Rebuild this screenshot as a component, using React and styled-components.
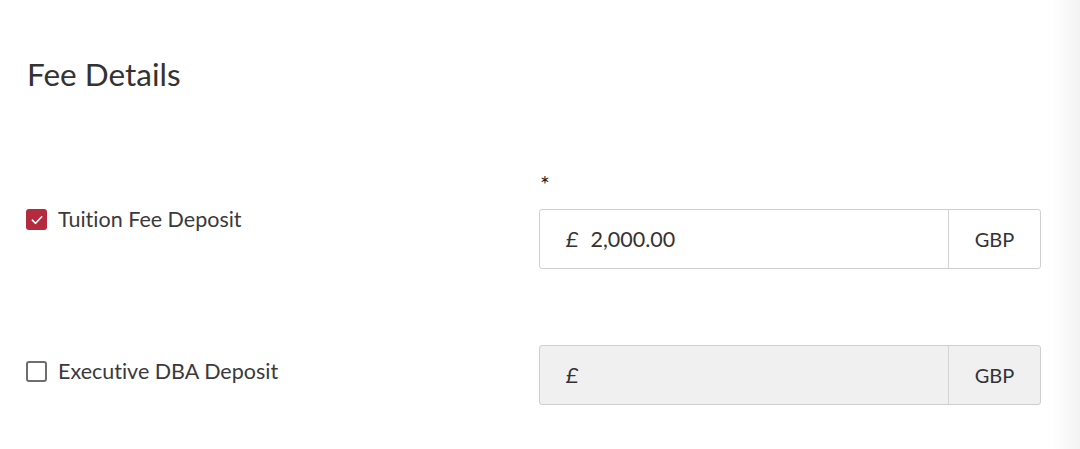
import React from 'react'
import styled, {createGlobalStyle} from 'styled-components'

const GlobalStyle = createGlobalStyle`
    html, body {
        margin: 0;
        padding: 0;
    }
    body {
        font-family: Lato, "Open Sans", sans-serif;
        font-variant-ligatures: none;
        color: #333;
        background: linear-gradient(to right, #fff 0, #fff 1052px, #f3f3f3 1080px);
        min-height: 449px;
    }
`

const Page = styled.div`
    padding: 57px 0 0 26px;
    min-height: 392px;
`

const Heading = styled.h2`
    margin: 0 0 79px 1px;
    font-size: 31.5px;
    line-height: 35px;
    font-weight: 400;
    color: #333;
`

const Row = styled.div`
    display: grid;
    grid-template-columns: 513px 502px;
    margin-top: ${p => p.$gap || 0}px;
`

const LabelCell = styled.div`
    padding-top: ${p => p.$offset || 0}px;
`

const CheckLabel = styled.label`
    display: flex;
    align-items: center;
    gap: 11px;
    font-size: 21.5px;
    line-height: 21px;
    color: #3a3a3a;
    cursor: pointer;
`

const Box = styled.span`
    display: inline-flex;
    align-items: center;
    justify-content: center;
    box-sizing: border-box;
    width: 21px;
    height: 21px;
    border-radius: 3px;
    background: ${p => p.$checked ? '#b42b3d' : '#fff'};
    border: ${p => p.$checked ? 'none' : '2px solid #6e6e6e'};
`

const FieldCell = styled.div`
    display: flex;
    flex-direction: column;
`

const Required = styled.div`
    height: 38px;
    padding-left: 1px;
    font-size: 23px;
    line-height: 26px;
    color: #222;
`

const InputGroup = styled.div`
    display: flex;
    height: 60px;
    box-sizing: border-box;
    border: 1px solid #cfcfcf;
    border-radius: 3px;
    background: ${p => p.$disabled ? '#f0f0f0' : '#fff'};
    font-size: 21.5px;
    color: #333;
`

const Amount = styled.div`
    flex: 1;
    display: flex;
    align-items: center;
    padding-left: 26px;
    gap: 12px;
`

const Currency = styled.span`
    font-style: italic;
`

const Addon = styled.div`
    width: 91px;
    display: flex;
    align-items: center;
    justify-content: center;
    border-left: 1px solid #d4d4d4;
    font-size: 20px;
`

const Check = ({checked}) => (
    <Box $checked={checked}>
        {checked && (
            <svg width="14" height="14" viewBox="0 0 14 14">
                <path d="M2.3 7.2 L5.6 10.3 L11.7 3.8" fill="none" stroke="#fff" strokeWidth="1.6" strokeLinecap="round" strokeLinejoin="round" />
            </svg>
        )}
    </Box>
)

const fees = [
    {label: 'Tuition Fee Deposit', checked: true, value: '2,000.00', required: true, gap: 0, offset: 38},
    {label: 'Executive DBA Deposit', checked: false, value: '', required: false, gap: 76, offset: 16},
]

export default function App() {
    return (
        <>
            <GlobalStyle />
            <Page>
                <Heading>Fee Details</Heading>
                {fees.map(fee => (
                    <Row key={fee.label} $gap={fee.gap}>
                        <LabelCell $offset={fee.offset}>
                            <CheckLabel>
                                <Check checked={fee.checked} />
                                {fee.label}
                            </CheckLabel>
                        </LabelCell>
                        <FieldCell>
                            {fee.required && <Required>*</Required>}
                            <InputGroup $disabled={!fee.checked}>
                                <Amount>
                                    <Currency>£</Currency>
                                    {fee.value && <span>{fee.value}</span>}
                                </Amount>
                                <Addon>GBP</Addon>
                            </InputGroup>
                        </FieldCell>
                    </Row>
                ))}
            </Page>
        </>
    )
}
